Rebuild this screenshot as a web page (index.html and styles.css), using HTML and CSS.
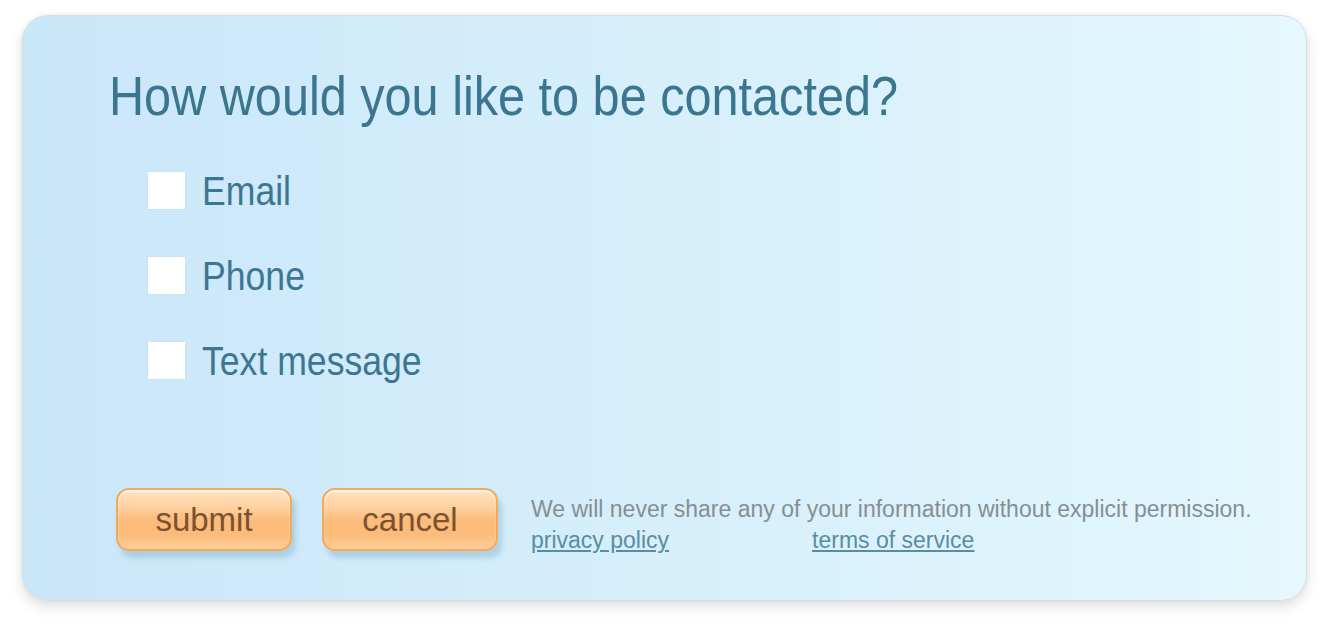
FILE: index.html
```html
<!DOCTYPE html>
<html>
<head>
<meta charset="utf-8">
<link rel="stylesheet" href="styles.css">
</head>
<body>
<div class="card">
  <h1 class="title"><span class="narrow">How would you like to be contacted?</span></h1>
  <div class="options">
    <label class="option"><span class="box"></span><span class="label">Email</span></label>
    <label class="option"><span class="box"></span><span class="label">Phone</span></label>
    <label class="option"><span class="box"></span><span class="label">Text message</span></label>
  </div>
  <div class="footer">
    <button class="btn">submit</button>
    <button class="btn">cancel</button>
    <div class="note">
      <p class="note-text">We will never share any of your information without explicit permission.</p>
      <div class="links"><a class="link" href="#">privacy policy</a><a class="link" href="#">terms of service</a></div>
    </div>
  </div>
</div>
</body>
</html>
```

FILE: styles.css
```css
html, body { margin: 0; padding: 0; background: #ffffff; }
body { width: 1329px; height: 630px; overflow: hidden; }
.card {
  box-sizing: border-box;
  margin: 15px 0 0 22px;
  width: 1285px;
  height: 586px;
  border-radius: 26px;
  border: 1px solid #d6dde2;
  background: linear-gradient(to right, #cae6f9 0%, #d6effb 50%, #e4f8fd 100%);
  box-shadow: 0 6px 14px rgba(0,0,0,0.12), 0 0 4px rgba(0,0,0,0.06);
  padding: 50px 0 0 86px;
  font-family: "Liberation Sans", Arial, sans-serif;
}
.title {
  margin: 0;
  font-weight: normal;
  font-size: 56px;
  line-height: 60px;
  color: #3b7590;
  white-space: nowrap;
}
.narrow {
  display: inline-block;
  transform: scaleX(0.868);
  transform-origin: left center;
}
.options {
  display: flex;
  flex-direction: column;
  gap: 48px;
  margin: 46px 0 0 39px;
}
.option { display: flex; align-items: center; height: 37px; }
.box {
  width: 37px; height: 37px;
  background: #ffffff;
  box-shadow: 0 0 1px rgba(160,190,210,0.6);
  margin-right: 17px;
}
.label {
  display: inline-block;
  font-size: 40px;
  color: #3d7691;
  line-height: 40px;
  transform: scaleX(0.89);
  transform-origin: left center;
  white-space: nowrap;
}
.footer {
  display: flex;
  align-items: flex-start;
  margin: 109px 0 0 7px;
}
.btn {
  width: 176px;
  height: 63px;
  margin-right: 30px;
  border-radius: 13px;
  border: 2px solid #f4a85c;
  background: linear-gradient(to bottom, #ffe3c2 0%, #ffd0a0 30%, #fcbc7c 50%, #fbbb7a 75%, #ffcf99 100%);
  box-shadow: inset 0 2px 2px rgba(255,255,255,0.7), 4px 7px 5px rgba(110,160,190,0.35);
  font-family: "Liberation Sans", Arial, sans-serif;
  font-size: 33px;
  color: #7a5232;
  padding: 0;
  cursor: pointer;
}
.note { margin: 8px 0 0 3px; }
.note-text {
  margin: 0;
  font-size: 23px;
  color: #858f93;
  line-height: 26px;
  white-space: nowrap;
}
.links { display: flex; margin-top: 5px; }
.link {
  font-size: 23px;
  line-height: 26px;
  color: #5c8ca2;
  text-decoration: underline;
}
.link + .link { margin-left: 143px; }
```
